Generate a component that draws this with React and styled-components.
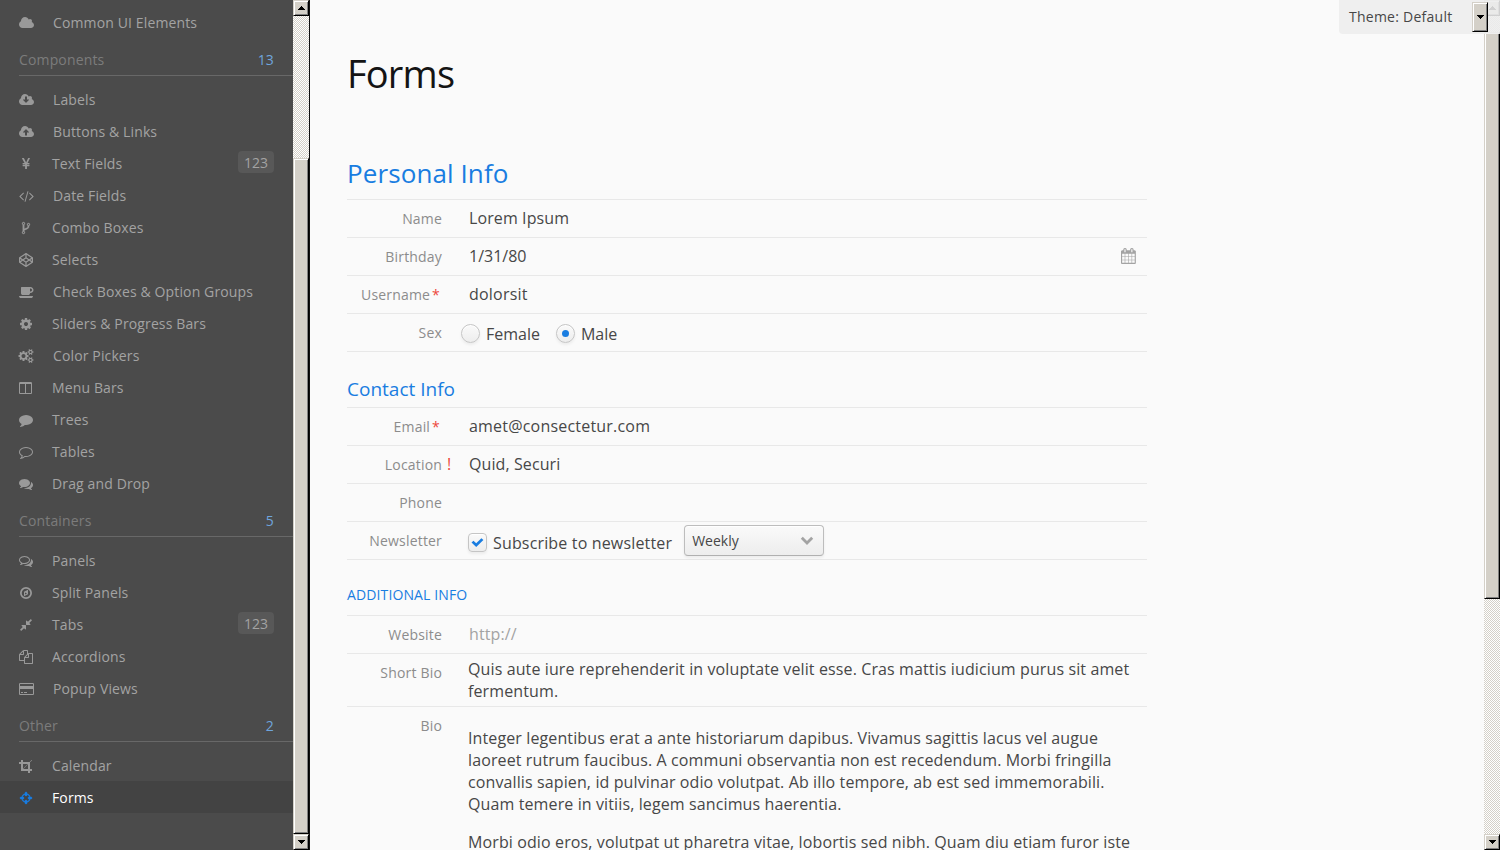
import React from "react";
import styled, { createGlobalStyle, css } from "styled-components";

const Global = createGlobalStyle`
  * { box-sizing: border-box; }
  html, body { margin: 0; padding: 0; height: 100%; overflow: hidden; }
  body { background: #fafafa; font-family: "Open Sans", sans-serif; font-size: 16px; color: #474747; }
  h1, h2, h3, h4, p { margin: 0; font-weight: 400; }
`;

const Page = styled.div`
  display: flex;
  width: 1500px;
  height: 850px;
  overflow: hidden;
  position: relative;
`;

/* ---------- icons ---------- */

const cloudBody =
  "M1984 1152q0 159-112.5 271.5t-271.5 112.5h-1088q-185 0-316.5-131.5t-131.5-316.5q0-132 71-241.5t187-163.5q-2-28-2-43 0-212 150-362t362-150q158 0 286.5 88t187.5 230q70-62 166-62 106 0 181 75t75 181q0 75-41 138 129 30 213 134.5t84 239.5z";
const smallGear =
  "M1856 1338v140q0 16-149 31-12 27-30 52 51 113 51 138 0 4-4 7-122 71-124 71-8 0-46-47t-52-68q-20 2-30 2t-30-2q-14 21-52 68t-46 47q-2 0-124-71-4-3-4-7 0-25 51-138-18-25-30-52-149-15-149-31v-140q0-16 149-31 13-29 30-52-51-113-51-138 0-4 4-7 4-2 35-20t59-34 30-16q8 0 46 46.5t52 67.5q20-2 30-2t30 2q51-71 92-112l6-2q4 0 124 70 4 3 4 7 0 25-51 138 17 23 30 52 149 15 149 31zM1600 1408q0-52-38-90t-90-38-90 38-38 90q0 53 37.5 90.5t90.5 37.5 90.5-37.5 37.5-90.5z";

const ICONS = {
  cloud: { x: 64, w: 15, d: [cloudBody] },
  cloudDown: {
    x: 64,
    w: 15,
    d: ["M1344 864q0-14-9-23t-23-9h-224v-352q0-13-9.5-22.5t-22.5-9.5h-192q-13 0-22.5 9.5t-9.5 22.5v352h-224q-13 0-22.5 9.5t-9.5 22.5q0 14 9 23l352 352q9 9 23 9t23-9l351-351q10-12 10-24z" + cloudBody],
  },
  cloudUp: {
    x: 64,
    w: 15,
    d: ["M1344 928q0-14-9-23l-352-352q-9-9-23-9t-23 9l-351 351q-10 12-10 24 0 14 9 23t23 9h224v352q0 13 9.5 22.5t22.5 9.5h192q13 0 22.5-9.5t9.5-22.5v-352h224q13 0 22.5-9.5t9.5-22.5z" + cloudBody],
  },
  yen: {
    d: ["M985.5 1536h-172q-13 0-22.5-9t-9.5-23v-330h-288q-13 0-22.5-9t-9.5-23v-103q0-13 9.5-22.5t22.5-9.5h288v-85h-288q-13 0-22.5-9t-9.5-23v-104q0-13 9.5-22.5t22.5-9.5h214l-321-578q-8-16 0-32 10-16 28-16h194q19 0 29 18l215 425q19 38 56 125 10-24 30.5-68t27.5-61l191-420q8-19 29-19h191q17 0 27 16 9 14 1 31l-313 579h215q13 0 22.5 9.5t9.5 22.5v104q0 14-9.5 23t-22.5 9h-290v85h290q13 0 22.5 9.5t9.5 22.5v103q0 14-9.5 23t-22.5 9h-290v330q0 13-9.5 22.5t-22.5 9.5z"],
  },
  code: {
    w: 15,
    d: ["M617 1399l-50 50q-10 10-23 10t-23-10l-466-466q-10-10-10-23t10-23l466-466q10-10 23-10t23 10l50 50q10 10 10 23t-10 23l-393 393 393 393q10 10 10 23t-10 23zm591-1067l-373 1291q-4 13-15.5 19.5t-23.5 2.5l-62-17q-13-4-19.5-15.5t-2.5-24.5l373-1291q4-13 15.5-19.5t23.5-2.5l62 17q13 4 19.5 15.5t2.5 24.5zm657 651l-466 466q-10 10-23 10t-23-10l-50-50q-10-10-10-23t10-23l393-393-393-393q-10-10-10-23t10-23l50-50q10-10 23-10t23 10l466 466q10 10 10 23t-10 23z"],
  },
  fork: {
    d: ["M672 1472q0-40-28-68t-68-28-68 28-28 68 28 68 68 28 68-28 28-68zm0-1152q0-40-28-68t-68-28-68 28-28 68 28 68 68 28 68-28 28-68zm640 128q0-40-28-68t-68-28-68 28-28 68 28 68 68 28 68-28 28-68zm96 0q0 52-26 96.5t-70 69.5q-2 287-226 414-67 38-203 81-128 40-169.5 71t-41.5 100v26q44 25 70 69.5t26 96.5q0 80-56 136t-136 56-136-56-56-136q0-52 26-96.5t70-69.5v-820q-44-25-70-69.5t-26-96.5q0-80 56-136t136-56 136 56 56 136q0 52-26 96.5t-70 69.5v497q54-26 154-57 55-17 87.5-29.5t70.5-31 59-39.5 40.5-51 28-69.5 8.5-91.5q-44-25-70-69.5t-26-96.5q0-80 56-136t136-56 136 56 56 136z"],
    bold: true,
  },
  codepen: {
    d: ["M216 1169l603 402v-359l-334-223zm-62-144l193-129-193-129v258zm819 546l603-402-269-180-334 223v359zm-77-493l272-182-272-182-272 182zm-411-275l334-223v-359l-603 402zm960 93l193 129v-258zm-138-93l269-180-603-402v359zm485-180v546q0 41-34 64l-819 546q-21 13-43 13t-43-13l-819-546q-34-23-34-64v-546q0-41 34-64l819-546q21-13 43-13t43 13l819 546q34 23 34 64z"],
  },
  coffee: {
    w: 15,
    d: ["M1664 640q0-80-56-136t-136-56h-64v384h64q80 0 136-56t56-136zm-1664 768h1792q0 106-75 181t-181 75h-1280q-106 0-181-75t-75-181zm1856-768q0 159-112.5 271.5t-271.5 112.5h-64v32q0 92-66 158t-158 66h-704q-92 0-158-66t-66-158v-736q0-26 19-45t45-19h1152q159 0 271.5 112.5t112.5 271.5z"],
  },
  cog: {
    d: ["M1152 896q0-106-75-181t-181-75-181 75-75 181 75 181 181 75 181-75 75-181zm512-109v222q0 12-8 23t-20 13l-185 28q-19 54-39 91 35 50 107 138 10 12 10 25t-9 23q-27 37-99 108t-94 71q-12 0-26-9l-138-108q-44 23-91 38-16 136-29 186-7 28-36 28h-222q-14 0-24.5-8.5t-11.5-21.5l-28-184q-49-16-90-37l-141 107q-10 9-25 9-14 0-25-11-126-114-165-168-7-10-7-23 0-12 8-23 15-21 51-66.5t54-70.5q-27-50-41-99l-183-27q-13-2-21-12.5t-8-23.5v-222q0-12 8-23t19-13l186-28q14-46 39-92-40-57-107-138-10-12-10-24 0-10 9-23 26-36 98.5-107.5t94.5-71.5q13 0 26 10l138 107q44-23 91-38 16-136 29-186 7-28 36-28h222q14 0 24.5 8.5t11.5 21.5l28 184q49 16 90 37l142-107q9-9 24-9 13 0 25 10 129 119 165 170 7 8 7 22 0 12-8 23-15 21-51 66.5t-54 70.5q26 50 41 98l183 28q13 2 21 12.5t8 23.5z"],
  },
  cogs: {
    w: 15,
    d: ["M832 896q0-106-75-181t-181-75-181 75-75 181 75 181 181 75 181-75 75-181zM1216 805v185q0 10-7 19.5t-16 10.5l-155 24q-11 35-32 76 34 48 90 115 7 11 7 20 0 12-7 19-23 30-82.5 89.5t-78.5 59.5q-11 0-21-7l-115-90q-37 19-77 31-11 108-23 155-7 24-30 24h-186q-11 0-20-7.5t-10-17.5l-23-153q-34-10-75-31l-118 89q-7 7-20 7-11 0-21-8-144-133-144-160 0-9 7-19 10-14 41-53t47-61q-23-44-35-82l-152-24q-10-1-17-9.5t-7-19.5v-185q0-10 7-19.5t16-10.5l155-24q11-35 32-76-34-48-90-115-7-11-7-20 0-12 7-20 22-30 82-89t79-59q11 0 21 7l115 90q34-18 77-32 11-108 23-154 7-24 30-24h186q11 0 20 7.5t10 17.5l23 153q34 10 75 31l118-89q8-7 20-7 11 0 21 8 144 133 144 160 0 8-7 19-12 16-42 54t-45 60q23 48 34 82l152 23q10 2 17 10.5t7 19.5z", smallGear],
    repeat: smallGear,
  },
  columns: {
    x: 64,
    d: ["M224 1536h608v-1152h-640v1120q0 13 9.5 22.5t22.5 9.5zm1376-32v-1120h-640v1152h608q13 0 22.5-9.5t9.5-22.5zm128-1216v1216q0 66-47 113t-113 47h-1344q-66 0-113-47t-47-113v-1216q0-66 47-113t113-47h1344q66 0 113 47t47 113z"],
  },
  comment: {
    d: ["M1792 896q0 174-120 321.5t-326 233-450 85.5q-70 0-145-8-198 175-460 242-49 14-114 22-17 2-30.5-9t-17.5-29v-1q-3-4-.5-12t2-10 4.5-9.5l6-9 7-8.5 8-9q7-8 31-34.5t34.5-38 31-39.5 32.5-51 27-59 26-76q-157-89-247.5-220t-90.5-281q0-130 71-248.5t191-204.5 286-136.5 348-50.5q244 0 450 85.5t326 233 120 321.5z"],
  },
  commentO: {
    d: ["M896 384q-204 0-381.5 69.5t-282 187.5-104.5 255q0 112 71.5 213.5t201.5 175.5l87 50-27 96q-24 91-70 172 152-63 275-171l43-38 57 6q69 8 130 8 204 0 381.5-69.5t282-187.5 104.5-255-104.5-255-282-187.5-381.5-69.5zm896 512q0 174-120 321.5t-326 233-450 85.5q-70 0-145-8-198 175-460 242-49 14-114 22h-5q-15 0-27-10.5t-16-27.5v-1q-3-4-.5-12t2-10 4.5-9.5l6-9 7-8.5 8-9q7-8 31-34.5t34.5-38 31-39.5 32.5-51 27-59 26-76q-157-89-247.5-220t-90.5-281q0-174 120-321.5t326-233 450-85.5 450 85.5 326 233 120 321.5z"],
  },
  comments: {
    d: ["M1408 768q0 139-94 257t-256.5 186.5-353.5 68.5q-86 0-176-16-124 88-278 128-36 9-86 16h-3q-11 0-20.5-8t-11.5-21q-1-3-1-6.5t.5-6.5 2-6l2.5-5 3.5-5.5 4-5 4.5-5 4-4.5q5-6 23-25t26-29.5 22.5-29 25-38.5 20.5-44q-124-72-195-177t-71-224q0-139 94-257t256.5-186.5 353.5-68.5 353.5 68.5 256.5 186.5 94 257zm384 256q0 120-71 224.5t-195 176.5q10 24 20.5 44t25 38.5 22.5 29 26 29.5 23 25q1 1 4 4.5t4.5 5 4 5 3.5 5.5l2.5 5 2 6 .5 6.5-1 6.5q-3 14-13 22t-22 7q-50-7-86-16-154-40-278-128-90 16-176 16-271 0-472-132 58 4 88 4 161 0 309-45t264-129q125-92 192-212t67-254q0-77-23-152 129 71 204 178t75 230z"],
  },
  commentsO: {
    d: ["M704 384q-153 0-286 52t-211.5 141-78.5 191q0 82 53 158t149 132l97 56-35 84q34-20 62-39l44-31 53 10q78 14 153 14 153 0 286-52t211.5-141 78.5-191-78.5-191-211.5-141-286-52zm0-128q191 0 353.5 68.5t256.5 186.5 94 257-94 257-256.5 186.5-353.5 68.5q-86 0-176-16-124 88-278 128-36 9-86 16h-3q-11 0-20.5-8t-11.5-21q-1-3-1-6.5t.5-6.5 2-6l2.5-5 3.5-5.5 4-5 4.5-5 4-4.5q5-6 23-25t26-29.5 22.5-29 25-38.5 20.5-44q-124-72-195-177t-71-224q0-139 94-257t256.5-186.5 353.5-68.5zm822 1169q10 24 20.5 44t25 38.5 22.5 29 26 29.5 23 25q1 1 4 4.5t4.5 5 4 5 3.5 5.5l2.5 5 2 6 .5 6.5-1 6.5q-3 14-13 22t-22 7q-50-7-86-16-154-40-278-128-90 16-176 16-271 0-472-132 58 4 88 4 161 0 309-45t264-129q125-92 192-212t67-254q0-77-23-152 129 71 204 178t75 230q0 120-71 224.5t-195 176.5z"],
  },
  compass: {
    d: ["M768 1088l256-128-256-128zM1152 494v546l-512 256v-546zM896 128a768 768 0 1 0 0 1536a768 768 0 1 0 0-1536zM896 352a544 544 0 1 1 0 1088a544 544 0 1 1 0-1088z"],
  },
  compress: {
    d: ["M896 960v448q0 26-19 45t-45 19-45-19l-144-144-332 332q-10 10-23 10t-23-10l-114-114q-10-10-10-23t10-23l332-332-144-144q-19-19-19-45t19-45 45-19h448q26 0 45 19t19 45zm755-672q0 13-10 23l-332 332 144 144q19 19 19 45t-19 45-45 19h-448q-26 0-45-19t-19-45v-448q0-26 19-45t45-19 45 19l144 144 332-332q10-10 23-10t23 10l114 114q10 10 10 23z"],
  },
  copy: {
    d: ["M1696 384q40 0 68 28t28 68v1216q0 40-28 68t-68 28h-960q-40 0-68-28t-28-68v-288h-544q-40 0-68-28t-28-68v-672q0-40 20-88t48-76l408-408q28-28 76-48t88-20h416q40 0 68 28t28 68v328q68-40 128-40h416zm-544 213l-299 299h299v-299zm-640-384l-299 299h299v-299zm196 647l316-316v-416h-384v416q0 40-28 68t-68 28h-416v640h512v-256q0-40 20-88t48-76zm956 804v-1152h-384v416q0 40-28 68t-68 28h-416v640h896z"],
  },
  card: {
    w: 15,
    d: ["M1760 128q66 0 113 47t47 113v1216q0 66-47 113t-113 47h-1600q-66 0-113-47t-47-113v-1216q0-66 47-113t113-47h1600zm-1600 128q-13 0-22.5 9.5t-9.5 22.5v224h1664v-224q0-13-9.5-22.5t-22.5-9.5h-1600zm1600 1280q13 0 22.5-9.5t9.5-22.5v-608h-1664v608q0 13 9.5 22.5t22.5 9.5h1600zm-1504-128v-128h256v128h-256zm384 0v-128h384v128h-384z"],
  },
  crop: {
    x: 64,
    d: ["M621 1280h595v-595zm-45-45l595-595h-595v595zm1152 77v192q0 14-9 23t-23 9h-224v224q0 14-9 23t-23 9h-192q-14 0-23-9t-9-23v-224h-864q-14 0-23-9t-9-23v-864h-224q-14 0-23-9t-9-23v-192q0-14 9-23t23-9h224v-224q0-14 9-23t23-9h192q14 0 23 9t9 23v224h851l246-247q10-9 23-9t23 9q9 10 9 23t-9 23l-247 246v851h224q14 0 23 9t9 23z"],
  },
  crosshairs: {
    d: ["M1325 1024h-109q-26 0-45-19t-19-45v-128q0-26 19-45t45-19h109q-32-108-112.5-188.5t-188.5-112.5v109q0 26-19 45t-45 19h-128q-26 0-45-19t-19-45v-109q-108 32-188.5 112.5t-112.5 188.5h109q26 0 45 19t19 45v128q0 26-19 45t-45 19h-109q32 108 112.5 188.5t188.5 112.5v-109q0-26 19-45t45-19h128q26 0 45 19t19 45v109q108-32 188.5-112.5t112.5-188.5zm339-192v128q0 26-19 45t-45 19h-143q-37 161-154.5 278.5t-278.5 154.5v143q0 26-19 45t-45 19h-128q-26 0-45-19t-19-45v-143q-161-37-278.5-154.5t-154.5-278.5h-143q-26 0-45-19t-19-45v-128q0-26 19-45t45-19h143q37-161 154.5-278.5t278.5-154.5v-143q0-26 19-45t45-19h128q26 0 45 19t19 45v143q161 37 278.5 154.5t154.5 278.5h143q26 0 45 19t19 45z"],
    bold: true,
  },
  calendar: {
    x: 64,
    d: ["M192 1664h288v-288h-288v288zm352 0h320v-288h-320v288zm-352-352h288v-320h-288v320zm352 0h320v-320h-320v320zm-352-384h288v-288h-288v288zm736 736h320v-288h-320v288zm-384-736h320v-288h-320v288zm768 736h288v-288h-288v288zm-384-352h320v-320h-320v320zm-352-864v-288q0-13-9.5-22.5t-22.5-9.5h-64q-13 0-22.5 9.5t-9.5 22.5v288q0 13 9.5 22.5t22.5 9.5h64q13 0 22.5-9.5t9.5-22.5zm736 864h288v-320h-288v320zm-384-384h320v-288h-320v288zm384 0h288v-288h-288v288zm32-480v-288q0-13-9.5-22.5t-22.5-9.5h-64q-13 0-22.5 9.5t-9.5 22.5v288q0 13 9.5 22.5t22.5 9.5h64q13 0 22.5-9.5t9.5-22.5zm384-64v1280q0 52-38 90t-90 38h-1408q-52 0-90-38t-38-90v-1280q0-52 38-90t90-38h128v-96q0-66 47-113t113-47h64q66 0 113 47t47 113v96h384v-96q0-66 47-113t113-47h64q66 0 113 47t47 113v96h128q52 0 90 38t38 90z"],
  },
};

const Svg = styled.svg`
  display: block;
  flex: none;
  fill: currentColor;
  overflow: visible;
`;

function Icon({ name, scale = 1 }) {
  const { x = 0, w = 14, d, repeat, bold } = ICONS[name];
  return (
    <Svg
      width={w * scale}
      height={14 * scale}
      viewBox={`${x} 0 ${w * 128} 1792`}
      fillRule="evenodd"
      stroke={bold ? "currentColor" : "none"}
      strokeWidth="40"
    >
      {d.map((p, i) => (
        <path key={i} d={p} />
      ))}
      {repeat && <path d={repeat} transform="translate(0 -1024)" />}
    </Svg>
  );
}

/* ---------- classic scroll bar ---------- */

const bevel = css`
  background: #d4d0c8;
  border: 1px solid;
  border-color: #d4d0c8 #000 #000 #d4d0c8;
  box-shadow: inset 1px 1px 0 #fff, inset -1px -1px 0 #808080;
`;

const Bar = styled.div`
  flex: none;
  width: ${(p) => p.$width}px;
  height: 850px;
  display: flex;
  flex-direction: column;
  background: repeating-conic-gradient(#fff 0 25%, #d4d0c8 0 50%) 0 0 / 2px 2px;
  border-right: ${(p) => p.$width - 16}px solid #111;
`;
const BarButton = styled.div`
  ${bevel}
  flex: none;
  height: 16px;
  display: flex;
  align-items: center;
  justify-content: center;
`;
const Space = styled.div`
  flex: none;
  height: ${(p) => p.$height}px;
`;
const Thumb = styled.div`
  ${bevel}
  flex: none;
  height: ${(p) => p.$height}px;
`;
const Rest = styled.div`
  flex: 1;
`;

function Arrow({ up }) {
  return (
    <Svg width="7" height="4" viewBox="0 0 7 4" shapeRendering="crispEdges" color="#000">
      <path d={up ? "M3 0h1v1h1v1h1v1h1v1H0V3h1V2h1V1h1z" : "M0 0h7v1H6v1H5v1H4v1H3V3H2V2H1V1H0z"} />
    </Svg>
  );
}

function ScrollBar({ width, before, thumb }) {
  return (
    <Bar $width={width}>
      <BarButton><Arrow up /></BarButton>
      <Space $height={before} />
      <Thumb $height={thumb} />
      <Rest />
      <BarButton><Arrow /></BarButton>
    </Bar>
  );
}

/* ---------- side menu ---------- */

const Side = styled.nav`
  flex: none;
  width: 293px;
  height: 850px;
  padding-top: 6px;
  background: #4b4b4b;
  font-size: 14px;
  color: #a3a3a3;
`;
const MenuItem = styled.div`
  display: flex;
  align-items: center;
  height: 32px;
  padding: 2px 19px 0 19px;
  ${(p) => p.$selected && css`
    background: #434343;
    color: #fff;
  `}
`;
const MenuIcon = styled.span`
  color: ${(p) => (p.$selected ? "#197de1" : "#999")};
  margin-right: 19px;
`;
const MenuText = styled.span`
  flex: 1;
  line-height: 20px;
  letter-spacing: 0.13px;
  white-space: nowrap;
`;
const Badge = styled.span`
  height: 22px;
  margin-top: -5px;
  padding: 0 6px;
  border-radius: 4px;
  background: #585858;
  line-height: 23px;
`;
const MenuTitle = styled.div`
  display: flex;
  justify-content: space-between;
  height: 38px;
  margin: 0 0 7px 19px;
  padding: 12px 19px 0 0;
  border-bottom: 1px solid #686868;
  line-height: 20px;
  letter-spacing: 0.15px;
  color: #7c7c7c;
`;
const Count = styled.span`
  color: #6fa5dc;
`;

const MENU = [
  { items: [["cloud", "Common UI Elements"]] },
  {
    title: "Components",
    items: [
      ["cloudDown", "Labels"],
      ["cloudUp", "Buttons & Links"],
      ["yen", "Text Fields", "123"],
      ["code", "Date Fields"],
      ["fork", "Combo Boxes"],
      ["codepen", "Selects"],
      ["coffee", "Check Boxes & Option Groups"],
      ["cog", "Sliders & Progress Bars"],
      ["cogs", "Color Pickers"],
      ["columns", "Menu Bars"],
      ["comment", "Trees"],
      ["commentO", "Tables"],
      ["comments", "Drag and Drop"],
    ],
  },
  {
    title: "Containers",
    items: [
      ["commentsO", "Panels"],
      ["compass", "Split Panels"],
      ["compress", "Tabs", "123"],
      ["copy", "Accordions"],
      ["card", "Popup Views"],
    ],
  },
  {
    title: "Other",
    items: [
      ["crop", "Calendar"],
      ["crosshairs", "Forms"],
    ],
  },
];

function Menu() {
  return (
    <Side>
      {MENU.map((group, i) => (
        <React.Fragment key={i}>
          {group.title && (
            <MenuTitle>
              <span>{group.title}</span>
              <Count>{group.items.length}</Count>
            </MenuTitle>
          )}
          {group.items.map(([icon, text, badge]) => {
            const selected = text === "Forms";
            return (
              <MenuItem key={text} $selected={selected}>
                <MenuIcon $selected={selected}><Icon name={icon} /></MenuIcon>
                <MenuText>{text}</MenuText>
                {badge && <Badge>{badge}</Badge>}
              </MenuItem>
            );
          })}
        </React.Fragment>
      ))}
    </Side>
  );
}

/* ---------- form ---------- */

const Content = styled.main`
  flex: 1;
  height: 850px;
  overflow: hidden;
  padding: 47px 0 0 37px;
`;
const Form = styled.div`
  width: 800px;
`;
const PageTitle = styled.h1`
  height: 102px;
  font-size: 38px;
  line-height: 52px;
  letter-spacing: -0.8px;
  color: #141414;
`;
const SectionTitle = styled.div`
  height: ${(p) => p.$height}px;
  padding-top: ${(p) => p.$top}px;
  font-size: ${(p) => p.$size}px;
  line-height: 28px;
  letter-spacing: ${(p) => p.$spacing || 0}px;
  color: #197de1;
`;
const Section = styled.section`
  border-bottom: 1px solid #e8e8e8;
`;
const Row = styled.div`
  display: flex;
  height: ${(p) => p.$height || 38}px;
  border-top: 1px solid #e8e8e8;
`;
const Caption = styled.div`
  flex: none;
  width: 95px;
  padding-top: 9px;
  font-size: 14px;
  line-height: 20px;
  letter-spacing: 0.18px;
  text-align: right;
  white-space: nowrap;
  color: #8c8c8c;
`;
const Mark = styled.div`
  flex: none;
  width: 27px;
  padding: ${(p) => (p.$error ? "7px 0 0 5px" : "0")};
  font-size: 16px;
  line-height: 22px;
  color: #ed473b;
`;
const Required = styled.span`
  padding: 0 2px 0 2px;
  color: #ed473b;
`;
const Value = styled.div`
  flex: 1;
  padding-top: 7px;
  line-height: 22px;
  letter-spacing: ${(p) => p.$spacing ?? 0.1}px;
  white-space: nowrap;
  color: ${(p) => (p.$muted ? "#a3a3a3" : "#474747")};
`;
const DateValue = styled(Value)`
  display: flex;
  justify-content: space-between;
  padding-right: 10px;
`;
const DateIcon = styled.span`
  padding-top: 3px;
  color: #a3a3a3;
`;
const Choices = styled.div`
  display: flex;
  align-items: flex-start;
  margin-left: ${(p) => p.$shift}px;
  padding-top: ${(p) => p.$top}px;
`;
const Control = styled.span`
  flex: none;
  display: flex;
  align-items: center;
  justify-content: center;
  width: 19px;
  height: 19px;
  border: 1px solid #c5c5c5;
  border-radius: ${(p) => (p.$round ? "50%" : "4px")};
  background: linear-gradient(#fafafa, #ededed);
  box-shadow: inset 0 1px 0 #fff, 0 2px 3px rgba(0, 0, 0, 0.06);
`;
const Dot = styled.span`
  width: 7px;
  height: 7px;
  border-radius: 50%;
  background: #197de1;
`;
const ChoiceText = styled.span`
  margin: -1px ${(p) => p.$gap}px 0 6px;
  line-height: 22px;
  letter-spacing: ${(p) => p.$spacing || 0}px;
  white-space: nowrap;
`;
const Select = styled.div`
  display: flex;
  align-items: center;
  justify-content: space-between;
  width: 140px;
  height: 31px;
  padding: 0 9px 0 7px;
  border: 1px solid #bdbdbd;
  border-bottom-color: #b0b0b0;
  border-radius: 4px;
  background: linear-gradient(#fafafa, #ededed);
  box-shadow: inset 0 1px 0 #fff, 0 2px 3px rgba(0, 0, 0, 0.06);
  font-size: 14px;
  line-height: 20px;
`;
const LongText = styled.div`
  flex: 1;
  margin-left: -1px;
  padding-top: ${(p) => p.$top}px;
  line-height: 22px;
  letter-spacing: 0.115px;
  p { margin-bottom: 16px; white-space: nowrap; }
`;

const Theme = styled.div`
  position: absolute;
  top: 0;
  right: 0;
  width: 161px;
  height: 34px;
  padding: 2px 12px 0 10px;
  display: flex;
  justify-content: space-between;
  border-bottom-left-radius: 4px;
  background: rgba(237, 237, 237, 0.88);
  font-size: 14px;
  line-height: 30px;
  letter-spacing: 0.25px;
`;
const ThemeButton = styled.div`
  ${bevel}
  display: flex;
  align-items: center;
  justify-content: center;
  width: 16px;
  height: 30px;
`;

function Field({ caption, required, error, height, children }) {
  return (
    <Row $height={height}>
      <Caption>
        {caption}
        {required && <Required>*</Required>}
      </Caption>
      <Mark $error={error}>{error ? "!" : null}</Mark>
      {children}
    </Row>
  );
}

export default function App() {
  return (
    <Page>
      <Global />
      <Menu />
      <ScrollBar width={17} before={142} thumb={676} />
      <Content>
        <Form>
          <PageTitle>Forms</PageTitle>
          <SectionTitle as="h2" $height={50} $top={10} $size={26} $spacing={0.1}>Personal Info</SectionTitle>
          <Section>
            <Field caption="Name"><Value>Lorem Ipsum</Value></Field>
            <Field caption="Birthday">
              <DateValue $spacing={0}>
                1/31/80
                <DateIcon><Icon name="calendar" scale={16 / 14} /></DateIcon>
              </DateValue>
            </Field>
            <Field caption="Username" required><Value $spacing={0.22}>dolorsit</Value></Field>
            <Field caption="Sex">
              <Choices $shift={-8} $top={10}>
                <Control $round />
                <ChoiceText $gap={16}>Female</ChoiceText>
                <Control $round><Dot /></Control>
                <ChoiceText $gap={0}>Male</ChoiceText>
              </Choices>
            </Field>
          </Section>
          <SectionTitle as="h3" $height={55} $top={23} $size={19}>Contact Info</SectionTitle>
          <Section>
            <Field caption="Email" required><Value $spacing={0.2}>amet@consectetur.com</Value></Field>
            <Field caption="Location" error><Value>Quid, Securi</Value></Field>
            <Field caption="Phone"><Value /></Field>
            <Field caption="Newsletter">
              <Choices $shift={-1} $top={3}>
                <Choices $shift={0} $top={8}>
                  <Control>
                    <Svg width="13" height="10" viewBox="0 0 13 10" color="#197de1">
                      <path d="M0.5 4.6l2-1.9 2.7 2.5 5.2-5 2 1.9-7.2 7z" />
                    </Svg>
                  </Control>
                  <ChoiceText $gap={12} $spacing={0.16}>Subscribe to newsletter</ChoiceText>
                </Choices>
                <Select>
                  Weekly
                  <Svg width="14" height="9" viewBox="0 0 14 9" color="#a3a3a3">
                    <path d="M0.8 2.8l2-2L7 4.9l4.2-4.1 2 2L7 8.9z" />
                  </Svg>
                </Select>
              </Choices>
            </Field>
          </Section>
          <SectionTitle as="h4" $height={55} $top={21} $size={14} $spacing={0.12}>ADDITIONAL INFO</SectionTitle>
          <Section>
            <Field caption="Website"><Value $muted>http://</Value></Field>
            <Field caption="Short Bio" height={53}>
              <LongText $top={4}>
                Quis aute iure reprehenderit in voluptate velit esse. Cras mattis iudicium purus sit amet<br />
                fermentum.
              </LongText>
            </Field>
            <Field caption="Bio" height={200}>
              <LongText $top={20}>
                <p>
                  Integer legentibus erat a ante historiarum dapibus. Vivamus sagittis lacus vel augue<br />
                  laoreet rutrum faucibus. A communi observantia non est recedendum. Morbi fringilla<br />
                  convallis sapien, id pulvinar odio volutpat. Ab illo tempore, ab est sed immemorabili.<br />
                  Quam temere in vitiis, legem sancimus haerentia.
                </p>
                <p>Morbi odio eros, volutpat ut pharetra vitae, lobortis sed nibh. Quam diu etiam furor iste</p>
              </LongText>
            </Field>
          </Section>
        </Form>
      </Content>
      <ScrollBar width={16} before={16} thumb={567} />
      <Theme>
        Theme: Default
        <ThemeButton><Arrow /></ThemeButton>
      </Theme>
    </Page>
  );
}
